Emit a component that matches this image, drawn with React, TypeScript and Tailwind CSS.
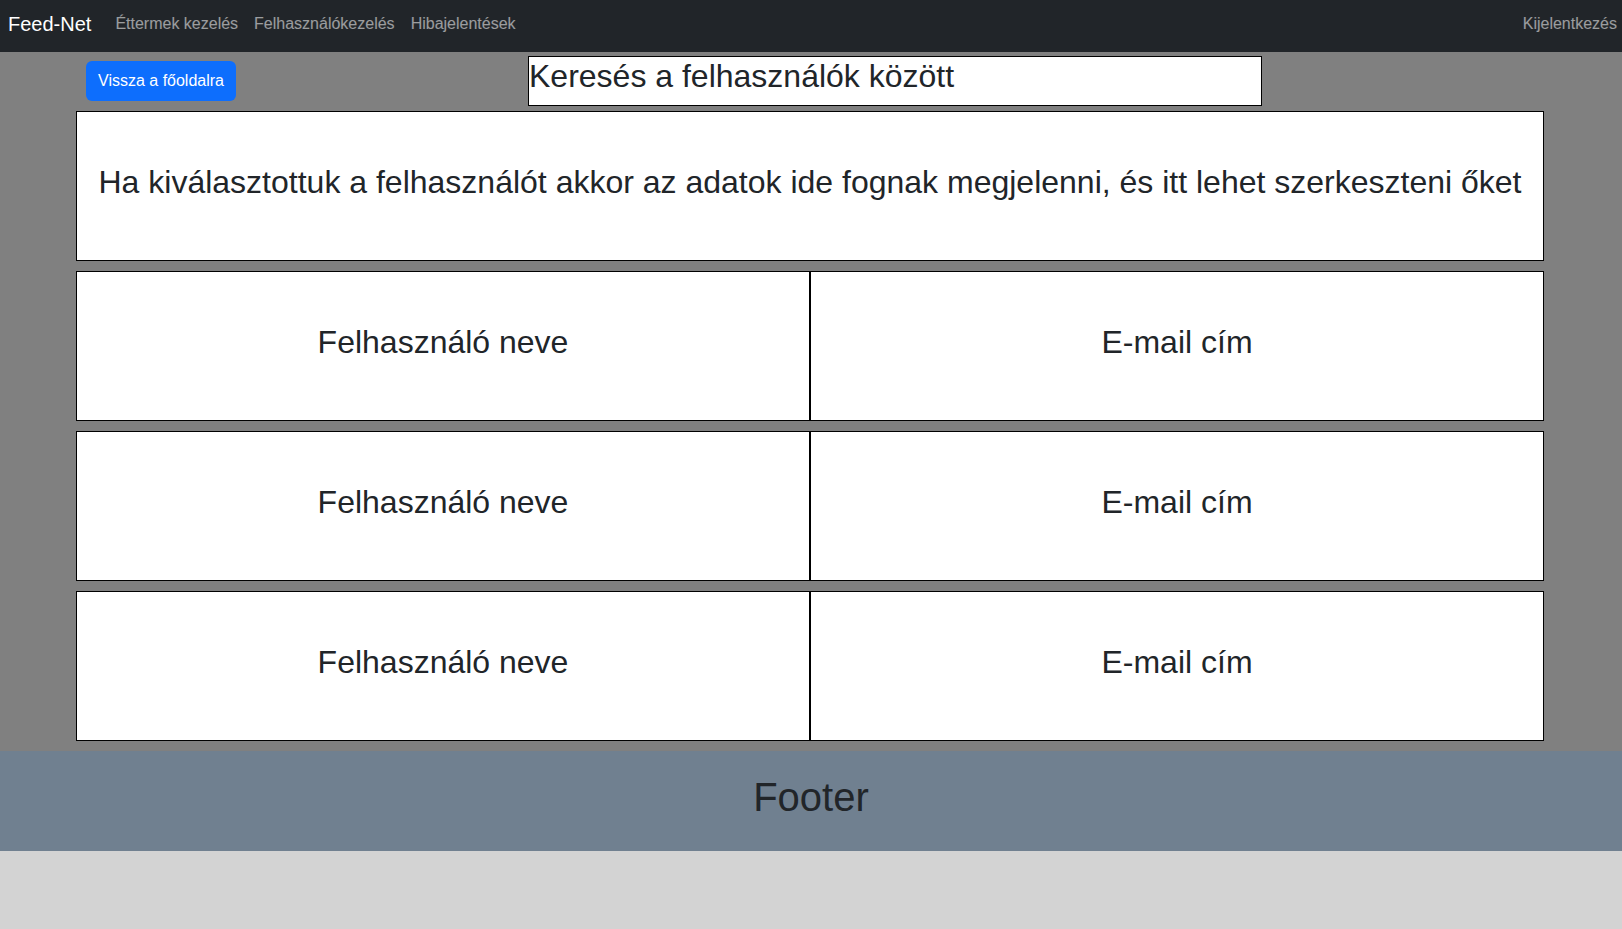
import React from "react";

// --- Components ---
const NavLink: React.FC<{ children: React.ReactNode; className?: string }> = ({
  children,
  className = "px-2",
}) => (
  <a className={`${className} text-[16px] leading-6 text-white/55 cursor-pointer`}>
    {children}
  </a>
);

const Cell: React.FC<{ children: React.ReactNode }> = ({ children }) => (
  <div className="h-[150px] border border-black bg-white flex items-center justify-center">
    <h2 className="mb-2 text-[32px] leading-[1.2] text-[#212529]">{children}</h2>
  </div>
);

const users = [
  { name: "Felhasználó neve", email: "E-mail cím" },
  { name: "Felhasználó neve", email: "E-mail cím" },
  { name: "Felhasználó neve", email: "E-mail cím" },
];

export default function App() {
  return (
    <div className="min-h-screen bg-[#d3d3d3] font-['Liberation_Sans',Arial,sans-serif]">
      {/* Navbar */}
      <nav className="h-[52px] bg-[#212529] flex items-start pt-[12px] pl-2">
        <span className="text-[20px] leading-6 text-white mr-4">Feed-Net</span>
        <NavLink>Éttermek kezelés</NavLink>
        <NavLink>Felhasználókezelés</NavLink>
        <NavLink>Hibajelentések</NavLink>
        <div className="ml-auto">
          <NavLink className="pl-2 pr-[5px]">Kijelentkezés</NavLink>
        </div>
      </nav>

      {/* Main */}
      <main className="bg-[#808080] pt-1 pb-[10px]">
        <div className="w-[1468px] ml-[76px]">
          <div className="flex items-center h-[50px]">
            <button className="ml-[10px] w-[150px] h-[40px] rounded-md bg-[#0d6efd] text-white text-[16px]">
              Vissza a főoldalra
            </button>
            <div className="ml-[292px] w-[734px] h-[50px] border border-black bg-white px-0 pt-[1px] text-[32px] leading-[1.15] text-[#212529]">
              Keresés a felhasználók között
            </div>
          </div>

          <div className="mt-[5px] flex flex-col gap-[10px]">
            <Cell>
              Ha kiválasztottuk a felhasználót akkor az adatok ide fognak
              megjelenni, és itt lehet szerkeszteni őket
            </Cell>
            {users.map((u, i) => (
              <div key={i} className="grid grid-cols-2">
                <Cell>{u.name}</Cell>
                <Cell>{u.email}</Cell>
              </div>
            ))}
          </div>
        </div>
      </main>

      {/* Footer */}
      <footer className="h-[100px] bg-[#708090] flex items-center justify-center">
        <h1 className="mb-2 text-[40px] leading-[1.2] text-[#212529]">Footer</h1>
      </footer>
    </div>
  );
}
